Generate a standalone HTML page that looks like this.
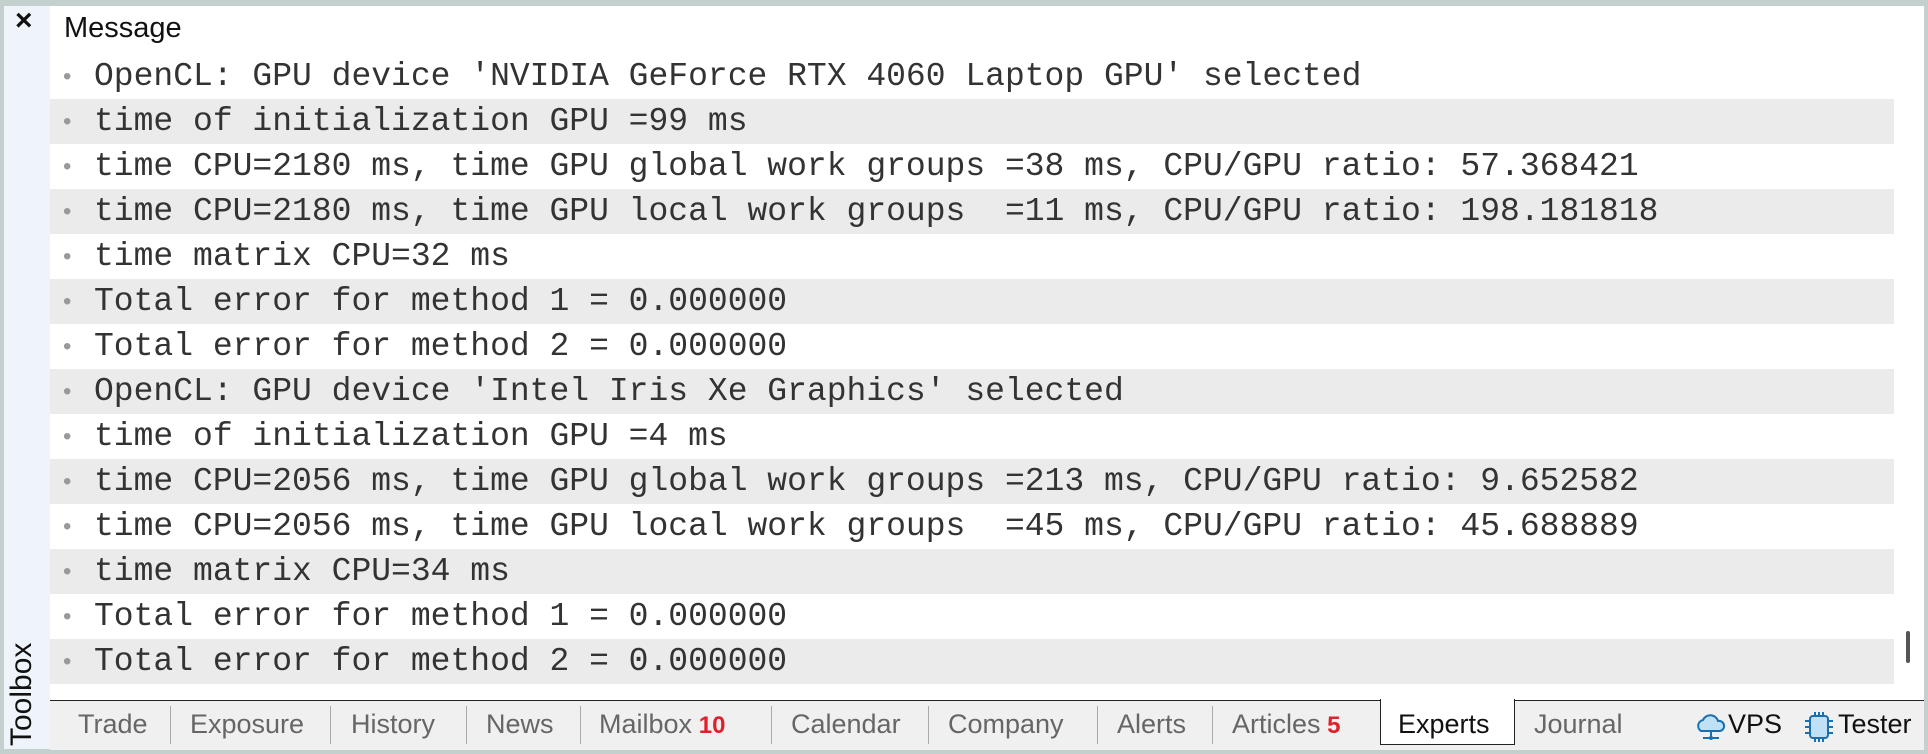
<!DOCTYPE html>
<html><head><meta charset="utf-8"><style>
body{margin:0;width:1928px;height:754px;overflow:hidden;background:#c4d0ce;position:relative;font-family:"Liberation Sans",sans-serif}
.strip{position:absolute;left:4px;top:6px;width:46px;height:743px;background:#eef4fa}
.main{position:absolute;left:50px;top:6px;width:1874px;height:743px;background:#fff}
.row{position:absolute;left:50px;width:1844px;height:45px;font-family:"Liberation Mono",monospace;font-size:33px;line-height:45px;color:#333;white-space:pre}
.row.g{background:#ebebeb}
.row span.b{position:absolute;left:13px;color:#999;font-family:"Liberation Sans",sans-serif;font-size:24px}
.row span.t{position:absolute;left:44px}
.tab{position:absolute;top:704px;font-size:27px;color:#666;line-height:40px;white-space:nowrap}
.sep{position:absolute;top:706px;width:1px;height:38px;background:#aaa}
.red{color:#e0202a;font-weight:bold;font-size:24px}
</style></head><body>
<div class="strip"></div>
<div class="main"></div>
<div style="position:absolute;left:15px;top:4px;font-size:30px;font-weight:bold;color:#111">×</div>
<div style="position:absolute;left:64px;top:12px;font-size:29px;color:#111">Message</div>
<div class="row" style="top:54px"><span class="b">•</span><span class="t">OpenCL: GPU device 'NVIDIA GeForce RTX 4060 Laptop GPU' selected</span></div>
<div class="row g" style="top:99px"><span class="b">•</span><span class="t">time of initialization GPU =99 ms</span></div>
<div class="row" style="top:144px"><span class="b">•</span><span class="t">time CPU=2180 ms, time GPU global work groups =38 ms, CPU/GPU ratio: 57.368421</span></div>
<div class="row g" style="top:189px"><span class="b">•</span><span class="t">time CPU=2180 ms, time GPU local work groups  =11 ms, CPU/GPU ratio: 198.181818</span></div>
<div class="row" style="top:234px"><span class="b">•</span><span class="t">time matrix CPU=32 ms</span></div>
<div class="row g" style="top:279px"><span class="b">•</span><span class="t">Total error for method 1 = 0.000000</span></div>
<div class="row" style="top:324px"><span class="b">•</span><span class="t">Total error for method 2 = 0.000000</span></div>
<div class="row g" style="top:369px"><span class="b">•</span><span class="t">OpenCL: GPU device 'Intel Iris Xe Graphics' selected</span></div>
<div class="row" style="top:414px"><span class="b">•</span><span class="t">time of initialization GPU =4 ms</span></div>
<div class="row g" style="top:459px"><span class="b">•</span><span class="t">time CPU=2056 ms, time GPU global work groups =213 ms, CPU/GPU ratio: 9.652582</span></div>
<div class="row" style="top:504px"><span class="b">•</span><span class="t">time CPU=2056 ms, time GPU local work groups  =45 ms, CPU/GPU ratio: 45.688889</span></div>
<div class="row g" style="top:549px"><span class="b">•</span><span class="t">time matrix CPU=34 ms</span></div>
<div class="row" style="top:594px"><span class="b">•</span><span class="t">Total error for method 1 = 0.000000</span></div>
<div class="row g" style="top:639px"><span class="b">•</span><span class="t">Total error for method 2 = 0.000000</span></div>
<div style="position:absolute;left:1906px;top:631px;width:4px;height:32px;background:#555;border-radius:2px"></div>
<div style="position:absolute;left:50px;top:700px;width:1874px;height:49px;background:#f0f0f0;border-top:1px solid #222"></div>
<div style="position:absolute;left:5px;top:746px;transform:rotate(-90deg);transform-origin:0 0;font-size:30px;color:#111;white-space:nowrap">Toolbox</div>
<div class="tab" style="left:78px">Trade</div><div class="sep" style="left:170px"></div>
<div class="tab" style="left:190px">Exposure</div><div class="sep" style="left:330px"></div>
<div class="tab" style="left:351px">History</div><div class="sep" style="left:466px"></div>
<div class="tab" style="left:486px">News</div><div class="sep" style="left:580px"></div>
<div class="tab" style="left:599px">Mailbox<span class="red"> 10</span></div><div class="sep" style="left:771px"></div>
<div class="tab" style="left:791px">Calendar</div><div class="sep" style="left:928px"></div>
<div class="tab" style="left:948px">Company</div><div class="sep" style="left:1097px"></div>
<div class="tab" style="left:1117px">Alerts</div><div class="sep" style="left:1212px"></div>
<div class="tab" style="left:1232px">Articles<span class="red"> 5</span></div>
<div style="position:absolute;left:1380px;top:699px;width:133px;height:45px;background:#fff;border:1px solid #222;border-top:none"></div>
<div class="tab" style="left:1398px;color:#111">Experts</div>
<div class="tab" style="left:1534px">Journal</div>
<svg style="position:absolute;left:1695px;top:711px" width="32" height="32" viewBox="0 0 32 32"><path d="M6 20a6 6 0 0 1 2-11 8 8 0 0 1 15 1 5 5 0 0 1 2 10z" fill="#bfe0f5" stroke="#1a6fb0" stroke-width="2"/><path d="M16 20v6M8 27h16" stroke="#1a6fb0" stroke-width="2"/><circle cx="16" cy="27" r="2" fill="#1a6fb0"/></svg>
<div class="tab" style="left:1728px;color:#111">VPS</div>
<svg style="position:absolute;left:1804px;top:711px" width="30" height="32" viewBox="0 0 30 32"><rect x="6" y="5" width="18" height="22" rx="3" fill="#bfe0f5" stroke="#1a6fb0" stroke-width="2"/><path d="M11 1v4M15 1v4M19 1v4M11 27v4M15 27v4M19 27v4M1 10h5M1 16h5M1 22h5M24 10h5M24 16h5M24 22h5" stroke="#1a6fb0" stroke-width="2"/></svg>
<div class="tab" style="left:1838px;color:#111">Tester</div>
</body></html>
